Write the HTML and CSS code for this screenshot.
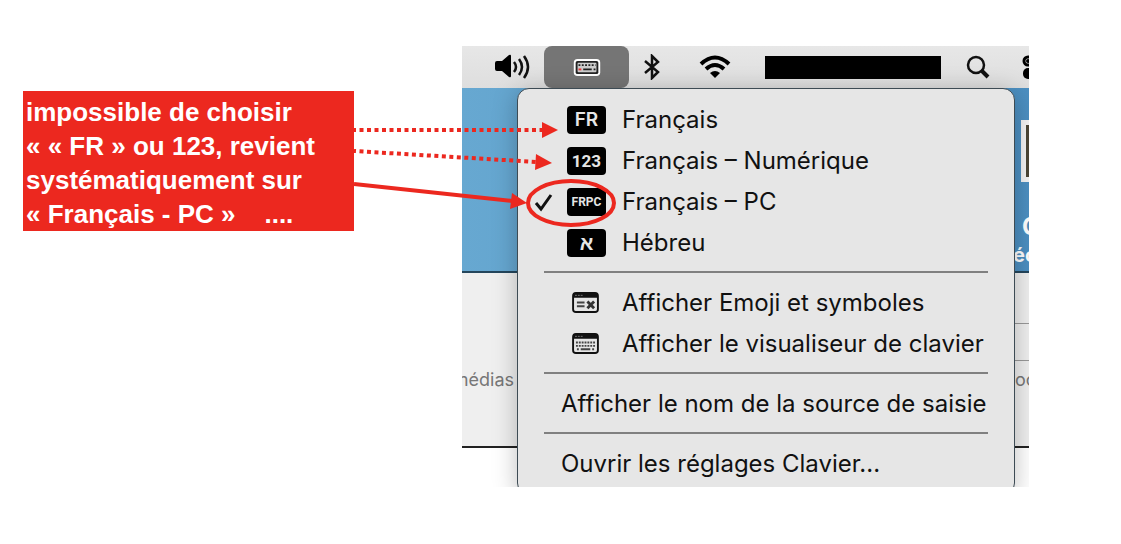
FILE: index.html
```
<!DOCTYPE html>
<html lang="fr">
  <head>
    <meta charset="UTF-8" />
    <meta name="viewport" content="width=device-width, initial-scale=1.0" />
    <title>Clavier Français - PC</title>
    <link rel="stylesheet" href="styles.css">
  </head>
  <body>
    <main class="page">
      <p class="note">
        impossible de choisir<br>
        « « FR » ou 123, revient<br>
        systématiquement sur<br>
        « Français - PC » &nbsp;&nbsp; ....
      </p>

      <section class="capture">
        <header class="menubar">
          <button class="bar-item volume" aria-label="Volume">
            <svg width="36" height="28" viewBox="0 0 36 28">
              <path d="M1 10q0-2 2-2h5l7-6q2-1 2 1v20q0 2-2 1l-7-6H3q-2 0-2-2z" />
              <g class="stroke">
                <path d="M20 9q4 5 0 10" />
                <path d="M25 6q6 8 0 16" />
                <path d="M30 3q8 11 0 22" />
              </g>
            </svg>
          </button>
          <button class="bar-item keyboard" aria-label="Clavier">
            <svg width="28" height="17" viewBox="0 0 28 18">
              <rect x="0" y="0" width="28" height="18" rx="4" fill="#fff" />
              <rect x="2" y="2" width="24" height="14" rx="2" fill="#222" />
              <rect x="4" y="4" width="20" height="10" rx="1" fill="#ccc" />
              <path d="M5 6.500h18" stroke="#222" stroke-width="2" stroke-dasharray="2 1.500" />
              <path d="M10 11h9M21 11h2" stroke="#222" stroke-width="2" />
              <path d="M5 11h3" stroke="#e33" stroke-width="2" />
            </svg>
          </button>
          <button class="bar-item bluetooth" aria-label="Bluetooth">
            <svg width="18" height="26" viewBox="0 0 18 26">
              <path class="stroke" d="M2 7l13 11-6 6V2l6 6L2 19" />
            </svg>
          </button>
          <button class="bar-item wifi" aria-label="Wi-Fi">
            <svg width="32" height="24" viewBox="0 0 32 24">
              <path d="M2 9Q16-4 30 9" fill="none" stroke="#000" stroke-width="4" />
              <path d="M7 14Q16 6 25 14" fill="none" stroke="#000" stroke-width="4" />
              <path d="M11 18Q16 14 21 18L16 23z" />
            </svg>
          </button>
          <div class="clock"></div>
          <button class="bar-item search" aria-label="Rechercher">
            <svg width="24" height="24" viewBox="0 0 24 24">
              <circle class="stroke" cx="10" cy="10" r="8" />
              <path d="M16 16l6 6" stroke="#111" stroke-width="4" />
            </svg>
          </button>
          <button class="bar-item control" aria-label="Centre de contrôle">
            <svg width="24" height="24" viewBox="0 0 24 24">
              <rect x="2" y="2" width="21" height="8" rx="4" fill="none" stroke="#000" stroke-width="3" />
              <circle cx="6" cy="6" r="2" />
              <rect x="1" y="13" width="23" height="11" rx="5" />
            </svg>
          </button>
        </header>

        <div class="desktop">
          <div class="backdrop">
            <div class="wallpaper">
              <div class="edge">
                <div class="photo"></div>
                <span class="file-name">C</span>
                <span class="file-info">éc</span>
              </div>
            </div>
            <div class="toolbar">
              <span class="tool-left">médias</span>
              <div class="edge">
                <div class="field"></div>
                <span class="tool-right">oc</span>
              </div>
            </div>
            <div class="window"></div>
          </div>

          <ul class="menu">
            <li><button class="item"><span class="check"></span><span class="badge fr">FR</span>Français</button></li>
            <li><button class="item"><span class="check"></span><span class="badge num">123</span>Français – Numérique</button></li>
            <li>
              <button class="item">
                <span class="check">
                  <svg width="20" height="20" viewBox="0 0 20 20">
                    <path d="M2 11l5 6L17 3" fill="none" stroke="#111" stroke-width="3" />
                  </svg>
                </span>
                <span class="badge frpc">FRPC</span>Français – PC
              </button>
            </li>
            <li><button class="item"><span class="check"></span><span class="badge heb">א</span>Hébreu</button></li>
            <li class="separator"></li>
            <li>
              <button class="item">
                <span class="check"></span>
                <span class="icon">
                  <svg width="27" height="21" viewBox="0 0 28 22">
                    <rect x="1" y="1" width="26" height="20" rx="3" fill="none" stroke="#111" stroke-width="2" />
                    <path d="M1 6V3q0-2 2-2h22q2 0 2 2v3z" fill="#111" />
                    <path d="M3 3.500h8" stroke="#777" stroke-dasharray="2 1" />
                    <path d="M5 11h8M5 15h8" stroke="#444" stroke-width="2" />
                    <path d="M16 10l7 7M23 10l-7 7" stroke="#333" stroke-width="3" />
                  </svg>
                </span>
                Afficher Emoji et symboles
              </button>
            </li>
            <li>
              <button class="item">
                <span class="check"></span>
                <span class="icon">
                  <svg width="27" height="21" viewBox="0 0 28 22">
                    <rect x="1" y="1" width="26" height="20" rx="3" fill="none" stroke="#111" stroke-width="2" />
                    <path d="M1 6V3q0-2 2-2h22q2 0 2 2v3z" fill="#111" />
                    <path d="M3 3.500h8" stroke="#777" stroke-dasharray="2 1" />
                    <path d="M4 10h20M4 13.500h20" stroke="#444" stroke-width="2" stroke-dasharray="2 1" />
                    <path d="M9 17h10M5 17h2M21 17h2" stroke="#444" stroke-width="2" />
                  </svg>
                </span>
                Afficher le visualiseur de clavier
              </button>
            </li>
            <li class="separator"></li>
            <li><button class="item plain">Afficher le nom de la source de saisie</button></li>
            <li class="separator"></li>
            <li><button class="item plain">Ouvrir les réglages Clavier...</button></li>
          </ul>
        </div>
      </section>

      <!-- arrows from the note to the menu entries -->
      <svg class="arrows" viewBox="0 0 1121 544" preserveAspectRatio="none">
        <g fill="none" stroke="#ec281f" stroke-width="4">
          <path d="M354 130H543" stroke-dasharray="4 3.500" stroke-dashoffset="2" />
          <path d="M354 151L537 162" stroke-dasharray="4 3.500" stroke-dashoffset="2" />
          <path d="M354 184L513 201" />
          <ellipse cx="571" cy="203" rx="43" ry="22" />
        </g>
        <g fill="#ec281f">
          <path d="M542 122l16 8-16 8z" />
          <path d="M536 154l16 9-17 7z" />
          <path d="M512 193l15 10-17 6z" />
        </g>
      </svg>
    </main>
  </body>
</html>
```
FILE: styles.css
```
* {
  box-sizing: border-box;
}

body {
  margin: 0;
  background-color: #fff;
  font-family: Inter, "Liberation Sans", sans-serif;
}

.page {
  position: relative;
  display: grid;
  grid-template-columns: 331fr 567fr;
  column-gap: 108px;
  align-items: start;
  min-height: 100vh;
  padding: 46px 92px 40px 23px;
}

.note {
  margin: 45px 0 0;
  padding: 4px 3px 0;
  background-color: #ec281f;
  color: #fff;
  font-family: "Liberation Sans", Arial, sans-serif;
  font-size: 26px;
  font-weight: bold;
  line-height: 34px;
  white-space: nowrap;
}

.capture {
  overflow: hidden;
  background-color: #fff;
}

button {
  border: none;
  background: none;
  padding: 0;
  font: inherit;
  color: inherit;
}

/* Menu bar */
.menubar {
  display: flex;
  align-items: center;
  height: 42px;
  padding-left: 18px;
  background: linear-gradient(#e7e7e7, #dedede);
}

.bar-item {
  display: flex;
  align-items: center;
  justify-content: center;
  flex: none;
  height: 42px;
}

.stroke {
  fill: none;
  stroke: #111;
  stroke-width: 2.5;
}

.volume {
  width: 64px;
}

.keyboard {
  width: 85px;
  border-radius: 8px;
  background-color: #757575;
}

.bluetooth {
  width: 46px;
}

.wifi {
  width: 79px;
}

.clock {
  flex: 1;
  height: 23px;
  margin-left: 11px;
  background-color: #000;
}

.search {
  width: 74px;
}

.control {
  width: 14px;
  padding-left: 7px;
  justify-content: flex-start;
  overflow: hidden;
}

.control svg {
  flex: none;
}

/* Desktop behind the menu */
.desktop {
  display: grid;
}

.backdrop,
.menu {
  grid-area: 1 / 1;
}

.backdrop {
  display: grid;
  grid-template-rows: 185px 175px 1fr;
}

.wallpaper,
.toolbar {
  display: flex;
  justify-content: space-between;
  border-bottom: 2px solid #222;
}

.wallpaper {
  border-color: #24465c;
  background: linear-gradient(90deg, #67a8d1, #4c8fc1);
}

.toolbar {
  background-color: #efefef;
  color: #777;
  font-size: 18px;
}

.window {
  background-color: #fff;
}

.edge {
  width: 16px;
  flex: none;
  margin-left: auto;
  color: #fff;
  font-weight: bold;
  white-space: nowrap;
}

.photo {
  height: 62px;
  margin: 32px 0 0 8px;
  border: 5px solid #f4f4f4;
  border-right: none;
  background-color: #4b4636;
}

.file-name,
.file-info,
.tool-right {
  display: block;
}

.file-name {
  margin-top: 30px;
  padding-left: 9px;
  font-size: 24px;
  line-height: 30px;
}

.file-info {
  font-size: 20px;
  line-height: 26px;
}

.tool-left {
  display: flex;
  justify-content: flex-end;
  width: 52px;
  padding-top: 95px;
  line-height: 24px;
}

.field {
  height: 38px;
  margin-top: 50px;
  border: 1px solid #999;
  border-width: 1px 0;
}

.tool-right {
  margin-top: 7px;
  padding-left: 2px;
  color: #777;
  font-weight: normal;
  line-height: 24px;
}

/* Input source menu */
.menu {
  z-index: 1;
  margin: 0 14px -8px 55px;
  padding: 10px 0;
  border: 1px solid #3d4b54;
  border-radius: 12px;
  background-color: #e6e6e6;
  box-shadow: 0 4px 24px rgba(0, 0, 0, 0.25);
  list-style: none;
}

.item {
  display: flex;
  align-items: center;
  width: 100%;
  height: 41px;
  padding-left: 16px;
  color: #111;
  font-size: 24px;
  line-height: 30px;
  text-align: left;
  white-space: nowrap;
}

.plain {
  padding-left: 43px;
}

.check {
  display: flex;
  flex: none;
  width: 33px;
}

.badge,
.icon {
  display: flex;
  align-items: center;
  justify-content: center;
  flex: none;
  width: 39px;
  height: 28px;
  margin-right: 16px;
}

.icon {
  padding-right: 2px;
}

.badge {
  border-radius: 4px;
  background-color: #000;
  color: #e6e6e6;
  font-weight: bold;
}

.fr {
  font-size: 19px;
  font-weight: 600;
}

.num {
  font-family: Roboto, sans-serif;
  font-size: 17px;
}

.frpc {
  font-family: Roboto, sans-serif;
  font-size: 12px;
}

.heb {
  font-family: "Liberation Sans", sans-serif;
  font-size: 20px;
}

.separator {
  height: 19px;
  padding: 8px 26px 0;
}

.separator::before {
  content: "";
  display: block;
  height: 2px;
  background-color: #808080;
}

.arrows {
  position: absolute;
  top: 0;
  left: 0;
  z-index: 2;
  width: 100%;
  height: 100%;
  pointer-events: none;
}
```
